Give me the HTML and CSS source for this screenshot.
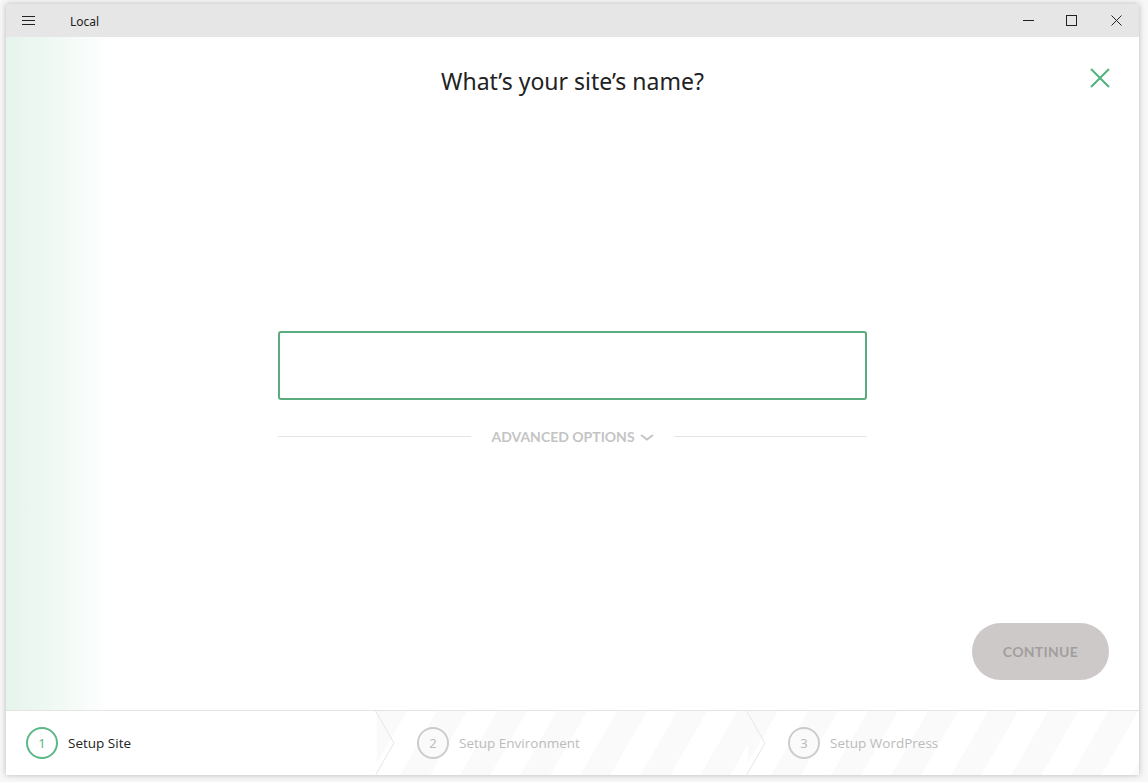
FILE: index.html
```html
<!DOCTYPE html>
<html>
<head>
<meta charset="utf-8">
<link rel="stylesheet" href="styles.css">
</head>
<body>
<div class="window">
  <header class="titlebar">
    <div class="tb-left">
      <svg class="hamburger" width="13" height="9" viewBox="0 0 13 9"><path d="M0 0.5H13M0 4.5H13M0 8.5H13" stroke="#222" stroke-width="1"/></svg>
      <span class="app-name">Local</span>
    </div>
    <div class="tb-controls">
      <span class="ctl"><svg width="11" height="11" viewBox="0 0 11 11"><path d="M0 5.5H11" stroke="#222" stroke-width="1"/></svg></span>
      <span class="ctl"><svg width="11" height="11" viewBox="0 0 11 11"><rect x="0.5" y="0.5" width="10" height="10" fill="none" stroke="#222" stroke-width="1"/></svg></span>
      <span class="ctl"><svg width="11" height="11" viewBox="0 0 11 11"><path d="M0.5 0.5L10.5 10.5M10.5 0.5L0.5 10.5" stroke="#222" stroke-width="1"/></svg></span>
    </div>
  </header>
  <main class="content">
    <div class="head-row">
      <h1 class="title">What’s your site’s name?</h1>
      <svg class="close-x" width="20" height="20" viewBox="0 0 20 20"><path d="M1 1L19 19M19 1L1 19" stroke="#51b27d" stroke-width="2"/></svg>
    </div>
    <div class="form">
      <input class="name-input" type="text">
      <div class="advanced">
        <span class="rule"></span>
        <span class="adv-text">ADVANCED OPTIONS <svg class="chev" width="14" height="7" viewBox="0 0 14 7"><path d="M1 1L7 5.5L13 1" fill="none" stroke="#c4c4c4" stroke-width="2"/></svg></span>
        <span class="rule"></span>
      </div>
    </div>
    <div class="actions">
      <button class="continue">CONTINUE</button>
    </div>
  </main>
  <footer class="steps">
    <div class="step active">
      <span class="num">1</span><span class="label">Setup Site</span>
      <svg class="sep" width="22" height="66" viewBox="0 0 22 66"><path d="M0 0L19 33L0 66" fill="none" stroke="#e6e6e6" stroke-width="1"/></svg>
    </div>
    <div class="step striped">
      <span class="num">2</span><span class="label">Setup Environment</span>
      <svg class="sep" width="22" height="66" viewBox="0 0 22 66"><path d="M0 0L19 33L0 66" fill="none" stroke="#e6e6e6" stroke-width="1"/></svg>
    </div>
    <div class="step striped last">
      <span class="num">3</span><span class="label">Setup WordPress</span>
    </div>
  </footer>
</div>
</body>
</html>
```

FILE: styles.css
```css
* { box-sizing: border-box; }
html, body { margin: 0; padding: 0; }
body {
  width: 1148px;
  height: 782px;
  background: #f7f7f7;
  font-family: "Noto Sans", "Open Sans", sans-serif;
  padding: 4px 9px 7px 6px;
}
.window {
  width: 1133px;
  height: 771px;
  background: #fff;
  display: flex;
  flex-direction: column;
  box-shadow: 0 0 6px rgba(0,0,0,0.25);
}
.titlebar {
  height: 33px;
  background: #e6e6e6;
  display: flex;
  align-items: center;
  justify-content: space-between;
  flex-shrink: 0;
}
.tb-left { display: flex; align-items: center; }
.hamburger { margin-left: 16px; display: block; }
.app-name {
  margin-left: 35px;
  margin-top: 1px;
  font-family: "Noto Sans", sans-serif;
  font-size: 12px;
  color: #222;
}
.tb-controls { display: flex; height: 100%; padding-right: 0; }
.ctl {
  width: 45px;
  display: flex;
  align-items: center;
  justify-content: center;
}
.ctl:first-child { margin-right: -2px; }
.ctl svg { display: block; }
.content {
  flex: 1;
  position: relative;
  background: linear-gradient(to right, #e6f4ec 0px, #eef8f2 40px, #ffffff 105px);
  display: flex;
  flex-direction: column;
}
.head-row {
  height: 92px;
  display: flex;
  justify-content: center;
  position: relative;
}
.title {
  margin: 28px 0 0;
  font-weight: 400;
  font-size: 23px;
  color: #222;
  letter-spacing: 0;
}
.close-x {
  position: absolute;
  right: 29px;
  top: 31px;
}
.form {
  margin-top: 202px;
  align-self: center;
  width: 589px;
}
.name-input {
  display: block;
  width: 589px;
  height: 69px;
  border: 2px solid #5aab7e;
  border-radius: 3px;
  background: #fff;
  outline: none;
}
.advanced {
  margin-top: 28px;
  display: flex;
  align-items: center;
  gap: 20px;
}
.rule { flex: 1; height: 1px; background: #e4e4e4; }
.adv-text {
  font-family: "Lato", "Open Sans", sans-serif;
  font-weight: 700;
  font-size: 14px;
  color: #c4c4c4;
  display: flex;
  align-items: center;
  gap: 5px;
}
.chev { display: block; margin-top: 1px; }
.actions {
  margin-top: auto;
  display: flex;
  justify-content: flex-end;
  padding: 0 30px 30px 0;
}
.continue {
  width: 137px;
  height: 57px;
  border: none;
  border-radius: 29px;
  background: #cdc9c9;
  color: #a29e9e;
  font-family: "Lato", "Open Sans", sans-serif;
  font-weight: 700;
  font-size: 14px;
  letter-spacing: 0.3px;
}
.steps {
  height: 65px;
  flex-shrink: 0;
  border-top: 1px solid #e4e4e4;
  display: flex;
  background: #fff;
}
.step {
  width: 371px;
  position: relative;
  display: flex;
  align-items: center;
  padding-left: 20px;
}
.step.last { flex: 1; }
.striped {
  background: repeating-linear-gradient(120deg, #fafafa 0 26px, #ffffff 26px 52px);
}
.num {
  width: 32px;
  height: 32px;
  border-radius: 50%;
  border: 2px solid #ccc;
  display: flex;
  align-items: center;
  justify-content: center;
  font-size: 13px;
  color: #bbb;
  margin-right: 10px;
}
.label {
  font-family: "Open Sans", sans-serif;
  font-size: 13.5px;
  color: #bbb;
}
.step.active .num { border-color: #5cb887; color: #5cb887; }
.step.active .label { color: #222; }
.step:not(.active) { padding-left: 40px; }
.sep {
  position: absolute;
  right: -20px;
  top: -1px;
  z-index: 2;
  display: block;
}
```
